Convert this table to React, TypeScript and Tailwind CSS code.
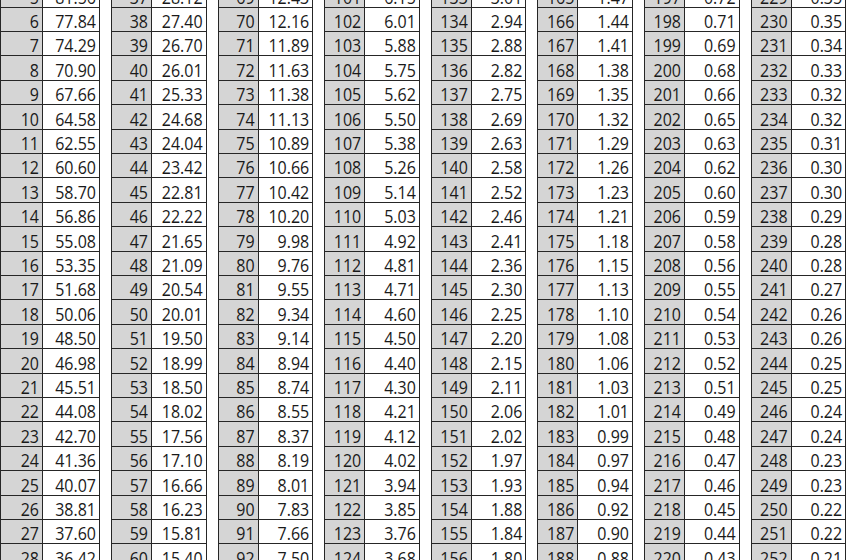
const groups: [number, string[]][] = [
  [5, ["81.56", "77.84", "74.29", "70.90", "67.66", "64.58", "62.55", "60.60", "58.70", "56.86", "55.08", "53.35", "51.68", "50.06", "48.50", "46.98", "45.51", "44.08", "42.70", "41.36", "40.07", "38.81", "37.60", "36.42"]],
  [37, ["28.12", "27.40", "26.70", "26.01", "25.33", "24.68", "24.04", "23.42", "22.81", "22.22", "21.65", "21.09", "20.54", "20.01", "19.50", "18.99", "18.50", "18.02", "17.56", "17.10", "16.66", "16.23", "15.81", "15.40"]],
  [69, ["12.43", "12.16", "11.89", "11.63", "11.38", "11.13", "10.89", "10.66", "10.42", "10.20", "9.98", "9.76", "9.55", "9.34", "9.14", "8.94", "8.74", "8.55", "8.37", "8.19", "8.01", "7.83", "7.66", "7.50"]],
  [101, ["6.15", "6.01", "5.88", "5.75", "5.62", "5.50", "5.38", "5.26", "5.14", "5.03", "4.92", "4.81", "4.71", "4.60", "4.50", "4.40", "4.30", "4.21", "4.12", "4.02", "3.94", "3.85", "3.76", "3.68"]],
  [133, ["3.01", "2.94", "2.88", "2.82", "2.75", "2.69", "2.63", "2.58", "2.52", "2.46", "2.41", "2.36", "2.30", "2.25", "2.20", "2.15", "2.11", "2.06", "2.02", "1.97", "1.93", "1.88", "1.84", "1.80"]],
  [165, ["1.47", "1.44", "1.41", "1.38", "1.35", "1.32", "1.29", "1.26", "1.23", "1.21", "1.18", "1.15", "1.13", "1.10", "1.08", "1.06", "1.03", "1.01", "0.99", "0.97", "0.94", "0.92", "0.90", "0.88"]],
  [197, ["0.72", "0.71", "0.69", "0.68", "0.66", "0.65", "0.63", "0.62", "0.60", "0.59", "0.58", "0.56", "0.55", "0.54", "0.53", "0.52", "0.51", "0.49", "0.48", "0.47", "0.46", "0.45", "0.44", "0.43"]],
  [229, ["0.35", "0.35", "0.34", "0.33", "0.32", "0.32", "0.31", "0.30", "0.30", "0.29", "0.28", "0.28", "0.27", "0.26", "0.26", "0.25", "0.25", "0.24", "0.24", "0.23", "0.23", "0.22", "0.22", "0.21"]],
];

function Group({ start, values, first }: { start: number; values: string[]; first?: boolean }) {
  return (
    <div
      className={
        first
          ? "grid shrink-0 grid-cols-[41px_56px] gap-px border border-[#262626] bg-[#262626]"
          : "grid shrink-0 grid-cols-[39px_53.6px] gap-px border border-[#262626] bg-[#262626]"
      }
    >
      {values.map((v, i) => (
        <div key={i} className="contents">
          <div className="flex h-[23.4px] items-end justify-end bg-[#d5d5d5] pr-[3px] pb-[1px]">
            <span className="inline-block origin-bottom scale-y-[1.15]">{start + i}</span>
          </div>
          <div className="flex h-[23.4px] items-end justify-end bg-white pr-[3px] pb-[1px]">
            <span className="inline-block origin-bottom scale-y-[1.15]">{v}</span>
          </div>
        </div>
      ))}
    </div>
  );
}

export default function App() {
  return (
    <div className="h-[560px] w-[850px] overflow-hidden bg-white">
      <div className="-mt-[17.7px] flex gap-[11px] font-['Open_Sans',sans-serif] text-[16px] leading-none font-medium text-[#1a1a1a]">
        {groups.map(([start, values], i) => (
          <Group key={start} start={start} values={values} first={i === 0} />
        ))}
      </div>
    </div>
  );
}
